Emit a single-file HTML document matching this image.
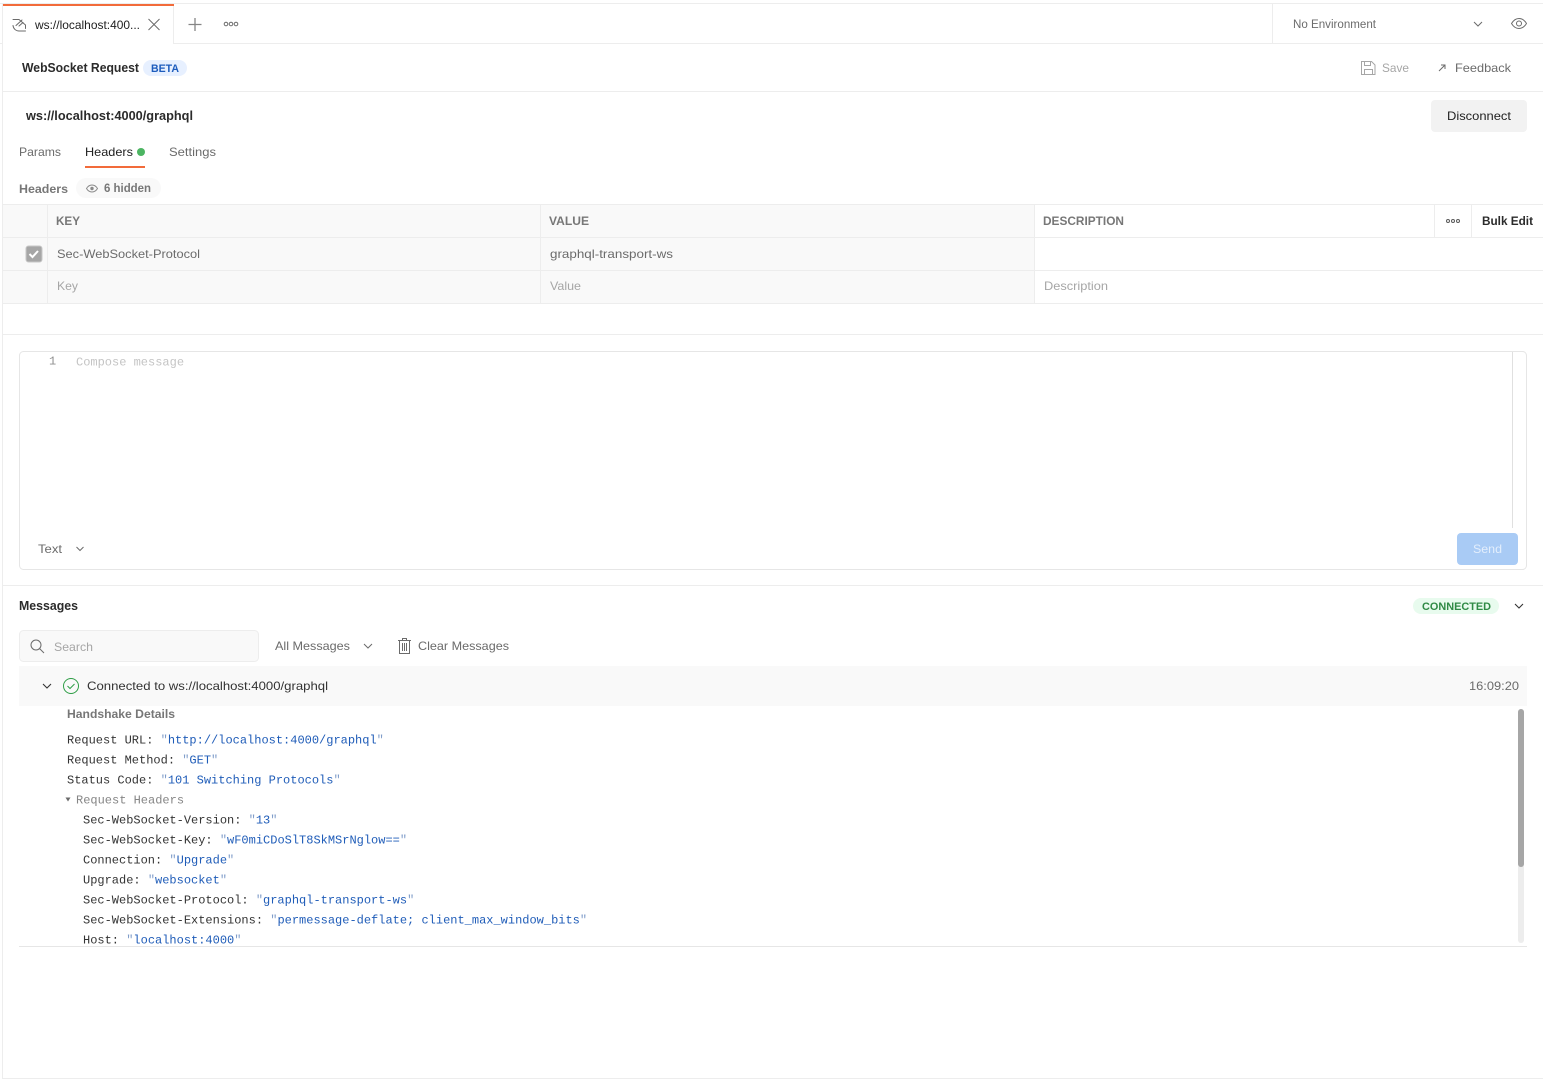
<!DOCTYPE html>
<html lang="en">
<head>
<meta charset="utf-8">
<title>WebSocket Request</title>
<style>
html,body{margin:0;padding:0;background:#fff;width:1543px;height:1079px;overflow:hidden}
svg{display:block;position:absolute;left:0;top:0}
text{font-family:"Liberation Sans",sans-serif;font-size:12px;fill:#212121;white-space:pre}
.b{font-weight:700}
.g{fill:#6b6b6b}
.bg{font-weight:700;fill:#777}
.l{fill:#a6a6a6}
.m{font-family:"Liberation Mono",monospace;fill:#333}
.v{fill:#1f5cb8}
.q{fill:#7f9cc9}
.ic{fill:none;stroke:#6b6b6b;stroke-width:1}
</style>
</head>
<body>
<svg width="1543" height="1079" viewBox="0 0 1543 1079" xmlns="http://www.w3.org/2000/svg">
<!-- frame lines -->
<rect x="0" y="3" width="1543" height="1" fill="#ededed"/>
<rect x="0" y="43" width="3" height="1" fill="#ededed"/>
<rect x="173" y="43" width="1370" height="1" fill="#ededed"/>
<rect x="2" y="4" width="1" height="1075" fill="#ededed"/>
<rect x="173" y="4" width="1" height="40" fill="#ededed"/>
<rect x="1272" y="4" width="1" height="39" fill="#ededed"/>
<rect x="3" y="4" width="171" height="2" fill="#f26b3a"/>
<rect x="3" y="91" width="1540" height="1" fill="#ededed"/>
<rect x="3" y="1078" width="1540" height="1" fill="#ededed"/>

<!-- tab -->
<g class="ic" stroke-linecap="round" stroke-linejoin="round">
<path d="M13 19.500h6l6.500 5.500v3.500"/>
<path d="M16 25.500l6-5.500M19 26l4-3.500"/>
<path d="M13 25.500c.5 3.500 3 5.500 6 5.500h6.500"/>
</g>
<text x="35" y="29" textLength="105" lengthAdjust="spacingAndGlyphs">ws://localhost:400...</text>
<path d="M148.500 19l11 11M159.500 19l-11 11" fill="none" stroke="#6b6b6b" stroke-width="1"/>
<path d="M195 18v13M188.500 24.500h13" fill="none" stroke="#858585" stroke-width="1.300"/>
<g fill="none" stroke="#6b6b6b" stroke-width="1"><circle cx="226" cy="24" r="1.800"/><circle cx="231" cy="24" r="1.800"/><circle cx="236" cy="24" r="1.800"/></g>

<!-- environment -->
<text x="1293" y="28" class="g" style="font-size:11.500px" textLength="83" lengthAdjust="spacingAndGlyphs">No Environment</text>
<path d="M1474 22l4 4 4-4" fill="none" stroke="#6b6b6b" stroke-width="1"/>
<path d="M1511.500 23.500c2-3.300 4.700-5 7.500-5s5.500 1.700 7.500 5c-2 3.300-4.700 5-7.500 5s-5.500-1.700-7.500-5z" fill="none" stroke="#6b6b6b" stroke-width="1"/>
<circle cx="1519" cy="23.500" r="2.500" fill="none" stroke="#6b6b6b" stroke-width="1"/>

<!-- title row -->
<text x="22" y="72" class="b" style="font-size:12.500px;fill:#2b2b2b" textLength="117" lengthAdjust="spacingAndGlyphs">WebSocket Request</text>
<rect x="143" y="60" width="44" height="16" rx="8" fill="#e7f0ff"/>
<text x="151" y="72" class="b" style="font-size:11px;fill:#1d5cbd" textLength="28" lengthAdjust="spacingAndGlyphs">BETA</text>
<g fill="none" stroke="#a6a6a6" stroke-width="1">
<path d="M1361.500 61.500h10l3.500 3.500v9.500h-13.500z"/>
<path d="M1364.500 61.500v4h6v-4M1364.500 74.500v-5h8v5"/>
</g>
<text x="1382" y="72" class="l" textLength="27" lengthAdjust="spacingAndGlyphs">Save</text>
<path d="M1439 71l6-6M1441 65h4v4" fill="none" stroke="#6b6b6b" stroke-width="1"/>
<text x="1455" y="72" class="g" textLength="56" lengthAdjust="spacingAndGlyphs">Feedback</text>

<!-- url row -->
<text x="26" y="120" class="b" style="font-size:12.500px;fill:#2b2b2b" textLength="167" lengthAdjust="spacingAndGlyphs">ws://localhost:4000/graphql</text>
<rect x="1431" y="100" width="96" height="32" rx="4" fill="#f2f2f2"/>
<text x="1447" y="120" textLength="64" lengthAdjust="spacingAndGlyphs">Disconnect</text>

<!-- tabs -->
<text x="19" y="156" class="g" textLength="42" lengthAdjust="spacingAndGlyphs">Params</text>
<text x="85" y="156" textLength="48" lengthAdjust="spacingAndGlyphs">Headers</text>
<circle cx="141" cy="152" r="4" fill="#4cb562"/>
<text x="169" y="156" class="g" textLength="47" lengthAdjust="spacingAndGlyphs">Settings</text>
<rect x="85" y="166" width="60" height="2" fill="#f26b3a"/>

<!-- headers label -->
<text x="19" y="193" class="bg" textLength="49" lengthAdjust="spacingAndGlyphs">Headers</text>
<rect x="76" y="178" width="85" height="20" rx="10" fill="#f9f9f9"/>
<path d="M86.500 188.500c1.500-2.500 3.300-3.500 5.500-3.500s4 1 5.500 3.500c-1.500 2.500-3.300 3.500-5.500 3.500s-4-1-5.500-3.500z" fill="none" stroke="#8a8a8a" stroke-width="1"/>
<circle cx="92" cy="188.500" r="1.700" fill="#8a8a8a"/>
<text x="104" y="192" class="bg" textLength="47" lengthAdjust="spacingAndGlyphs">6 hidden</text>

<!-- table -->
<rect x="3" y="205" width="1031" height="98" fill="#f9f9f9"/>
<rect x="3" y="204" width="1540" height="1" fill="#ededed"/>
<rect x="3" y="237" width="1540" height="1" fill="#ededed"/>
<rect x="3" y="270" width="1540" height="1" fill="#ededed"/>
<rect x="3" y="303" width="1540" height="1" fill="#ededed"/>
<rect x="3" y="334" width="1540" height="1" fill="#ededed"/>
<rect x="47" y="205" width="1" height="98" fill="#ededed"/>
<rect x="540" y="205" width="1" height="98" fill="#ededed"/>
<rect x="1034" y="205" width="1" height="98" fill="#ededed"/>
<rect x="1434" y="205" width="1" height="32" fill="#ededed"/>
<rect x="1471" y="205" width="1" height="32" fill="#ededed"/>
<text x="56" y="225" class="bg" textLength="24" lengthAdjust="spacingAndGlyphs">KEY</text>
<text x="549" y="225" class="bg" textLength="40" lengthAdjust="spacingAndGlyphs">VALUE</text>
<text x="1043" y="225" class="bg" textLength="81" lengthAdjust="spacingAndGlyphs">DESCRIPTION</text>
<g fill="none" stroke="#5a5a5a" stroke-width="1"><circle cx="1448" cy="221" r="1.500"/><circle cx="1453" cy="221" r="1.500"/><circle cx="1458" cy="221" r="1.500"/></g>
<text x="1482" y="225" class="b" style="fill:#2b2b2b" textLength="51" lengthAdjust="spacingAndGlyphs">Bulk Edit</text>
<rect x="26" y="246" width="16" height="16" rx="2.500" fill="#a6a6a6" stroke="#c8c8c8" stroke-width="1"/>
<path d="M29.500 254l3 3 5.500-6" fill="none" stroke="#fff" stroke-width="2"/>
<text x="57" y="258" class="g" textLength="143" lengthAdjust="spacingAndGlyphs">Sec-WebSocket-Protocol</text>
<text x="550" y="258" class="g" textLength="123" lengthAdjust="spacingAndGlyphs">graphql-transport-ws</text>
<text x="57" y="290" class="l" textLength="21" lengthAdjust="spacingAndGlyphs">Key</text>
<text x="550" y="290" class="l" textLength="31" lengthAdjust="spacingAndGlyphs">Value</text>
<text x="1044" y="290" class="l" textLength="64" lengthAdjust="spacingAndGlyphs">Description</text>

<!-- editor -->
<rect x="19.500" y="351.500" width="1507" height="218" rx="4" fill="#fff" stroke="#e6e6e6"/>
<rect x="1512" y="352" width="1" height="176" fill="#e0e0e0"/>
<text x="49" y="364.500" class="m" style="fill:#8f8f8f">1</text>
<text x="76" y="365.500" class="m" style="fill:#c4c4c4">Compose message</text>
<text x="38" y="553" class="g" textLength="24" lengthAdjust="spacingAndGlyphs">Text</text>
<path d="M76.500 547l3.500 3.500 3.500-3.500" fill="none" stroke="#6b6b6b" stroke-width="1"/>
<rect x="1457" y="533" width="61" height="32" rx="4" fill="#a9cbf5"/>
<text x="1473" y="553" style="fill:#e3eefc" textLength="29" lengthAdjust="spacingAndGlyphs">Send</text>

<!-- messages -->
<rect x="3" y="585" width="1540" height="1" fill="#ededed"/>
<text x="19" y="610" class="b" style="font-size:12.500px;fill:#2b2b2b" textLength="59" lengthAdjust="spacingAndGlyphs">Messages</text>
<rect x="1413" y="598" width="86" height="16" rx="8" fill="#e8fbee"/>
<text x="1422" y="610" class="b" style="font-size:11px;fill:#2f8a45" textLength="69" lengthAdjust="spacingAndGlyphs">CONNECTED</text>
<path d="M1515 604l4 4 4-4" fill="none" stroke="#333" stroke-width="1.100"/>

<rect x="19.500" y="630.500" width="239" height="31" rx="4" fill="#f9f9f9" stroke="#ededed"/>
<circle cx="36" cy="645" r="5" fill="none" stroke="#6b6b6b" stroke-width="1"/>
<path d="M39.500 648.500l4.500 4.500" fill="none" stroke="#6b6b6b" stroke-width="1"/>
<text x="54" y="651" class="l" textLength="39" lengthAdjust="spacingAndGlyphs">Search</text>
<text x="275" y="650" class="g" textLength="75" lengthAdjust="spacingAndGlyphs">All Messages</text>
<path d="M364 644l4 4 4-4" fill="none" stroke="#6b6b6b" stroke-width="1"/>
<g fill="none" stroke="#6b6b6b" stroke-width="1">
<path d="M398 640.500h13M402.500 640.500v-2h4v2M399.500 640.500v13h10v-13M402.500 643v8M404.500 643v8M406.500 643v8"/>
</g>
<text x="418" y="650" class="g" textLength="91" lengthAdjust="spacingAndGlyphs">Clear Messages</text>

<rect x="19" y="666" width="1508" height="40" fill="#f9f9f9"/>
<path d="M43 684l4 4 4-4" fill="none" stroke="#333" stroke-width="1.100"/>
<circle cx="71" cy="686" r="7.500" fill="none" stroke="#2f9e47" stroke-width="1"/>
<path d="M67.500 686l2.500 2.500 4.500-4.500" fill="none" stroke="#2f9e47" stroke-width="1"/>
<text x="87" y="690" style="fill:#333" textLength="241" lengthAdjust="spacingAndGlyphs">Connected to ws://localhost:4000/graphql</text>
<text x="1469" y="690" class="g" textLength="50" lengthAdjust="spacingAndGlyphs">16:09:20</text>

<text x="67" y="718" class="bg" textLength="108" lengthAdjust="spacingAndGlyphs">Handshake Details</text>

<!-- details -->
<text x="67" y="743.500" class="m">Request URL: <tspan class="q">"</tspan><tspan class="v">http://localhost:4000/graphql</tspan><tspan class="q">"</tspan></text>
<text x="67" y="763.500" class="m">Request Method: <tspan class="q">"</tspan><tspan class="v">GET</tspan><tspan class="q">"</tspan></text>
<text x="67" y="783.500" class="m">Status Code: <tspan class="q">"</tspan><tspan class="v">101 Switching Protocols</tspan><tspan class="q">"</tspan></text>
<path d="M65.500 797.500h5l-2.500 4z" fill="#6b6b6b"/>
<text x="76" y="803.500" class="m" style="fill:#858585">Request Headers</text>
<text x="83" y="823.500" class="m">Sec-WebSocket-Version: <tspan class="q">"</tspan><tspan class="v">13</tspan><tspan class="q">"</tspan></text>
<text x="83" y="843.500" class="m">Sec-WebSocket-Key: <tspan class="q">"</tspan><tspan class="v">wF0miCDoSlT8SkMSrNglow==</tspan><tspan class="q">"</tspan></text>
<text x="83" y="863.500" class="m">Connection: <tspan class="q">"</tspan><tspan class="v">Upgrade</tspan><tspan class="q">"</tspan></text>
<text x="83" y="883.500" class="m">Upgrade: <tspan class="q">"</tspan><tspan class="v">websocket</tspan><tspan class="q">"</tspan></text>
<text x="83" y="903.500" class="m">Sec-WebSocket-Protocol: <tspan class="q">"</tspan><tspan class="v">graphql-transport-ws</tspan><tspan class="q">"</tspan></text>
<text x="83" y="923.500" class="m">Sec-WebSocket-Extensions: <tspan class="q">"</tspan><tspan class="v">permessage-deflate; client_max_window_bits</tspan><tspan class="q">"</tspan></text>
<text x="83" y="943.500" class="m">Host: <tspan class="q">"</tspan><tspan class="v">localhost:4000</tspan><tspan class="q">"</tspan></text>

<rect x="3" y="947" width="1540" height="131" fill="#fff"/>
<rect x="19" y="946" width="1508" height="1" fill="#e6e6e6"/>

<rect x="1518" y="709" width="6" height="234" rx="3" fill="#ededed"/>
<rect x="1518" y="709" width="6" height="158" rx="3" fill="#a6a6a6"/>
</svg>
</body>
</html>
